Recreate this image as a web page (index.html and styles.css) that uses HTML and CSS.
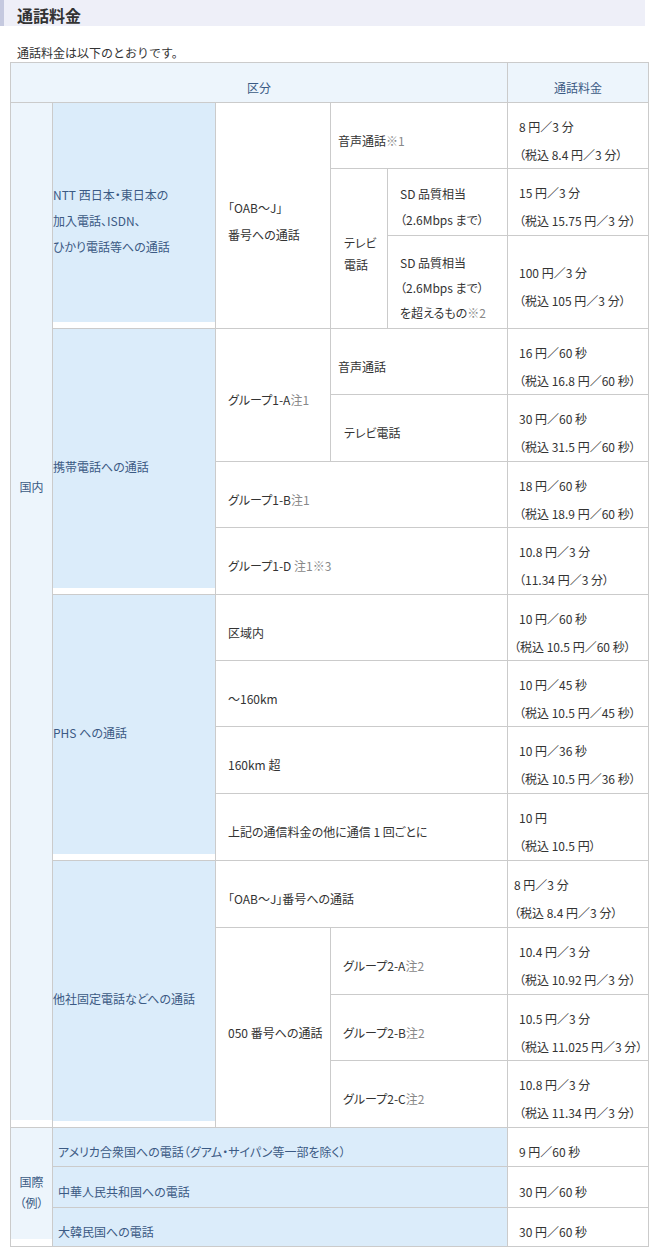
FILE: index.html
```html
<!DOCTYPE html>
<html lang="ja">
<head>
<meta charset="utf-8">
<title>通話料金</title>
<link rel="stylesheet" href="styles.css">
</head>
<body>
<div class="page">
  <h2 class="title">通話料金</h2>
  <p class="lead">通話料金は以下のとおりです。</p>
  <div class="rates">
    <div class="c hd cs5"><span>区分</span></div>
    <div class="c hd"><span>通話料金</span></div>

    <div class="c region rs15 domestic"><span>国内</span></div>
    <div class="c cat rs3 lh26"><span>NTT 西日本・東日本の</span><span>加入電話、ISDN、</span><span>ひかり電話等への通話</span></div>
    <div class="c rs3 lh27"><span>「OAB～J」</span><span>番号への通話</span></div>
    <div class="c cs2 sub"><span>音声通話<em class="note">※1</em></span></div>
    <div class="c price"><span>8 円／3 分</span><span>（税込 8.4 円／3 分）</span></div>

    <div class="c rs2 sub2 lh22"><span>テレビ</span><span>電話</span></div>
    <div class="c"><span>SD 品質相当</span><span>（2.6Mbps まで）</span></div>
    <div class="c price"><span>15 円／3 分</span><span>（税込 15.75 円／3 分）</span></div>

    <div class="c lh25"><span>SD 品質相当</span><span>（2.6Mbps まで）</span><span>を超えるもの<em class="note">※2</em></span></div>
    <div class="c price"><span>100 円／3 分</span><span>（税込 105 円／3 分）</span></div>

    <div class="c cat rs4"><span>携帯電話への通話</span></div>
    <div class="c rs2"><span>グループ1-A<em class="note">注1</em></span></div>
    <div class="c cs2 sub"><span>音声通話</span></div>
    <div class="c price"><span>16 円／60 秒</span><span>（税込 16.8 円／60 秒）</span></div>

    <div class="c cs2 sub2"><span>テレビ電話</span></div>
    <div class="c price"><span>30 円／60 秒</span><span>（税込 31.5 円／60 秒）</span></div>

    <div class="c cs3"><span>グループ1-B<em class="note">注1</em></span></div>
    <div class="c price"><span>18 円／60 秒</span><span>（税込 18.9 円／60 秒）</span></div>

    <div class="c cs3"><span>グループ1-D <em class="note">注1※3</em></span></div>
    <div class="c price"><span>10.8 円／3 分</span><span>（11.34 円／3 分）</span></div>

    <div class="c cat rs4"><span>PHS への通話</span></div>
    <div class="c cs3"><span>区域内</span></div>
    <div class="c price tight"><span class="ind">10 円／60 秒</span><span>（税込 10.5 円／60 秒）</span></div>

    <div class="c cs3"><span>～160km</span></div>
    <div class="c price"><span>10 円／45 秒</span><span>（税込 10.5 円／45 秒）</span></div>

    <div class="c cs3"><span>160km 超</span></div>
    <div class="c price"><span>10 円／36 秒</span><span>（税込 10.5 円／36 秒）</span></div>

    <div class="c cs3"><span>上記の通信料金の他に通信 1 回ごとに</span></div>
    <div class="c price"><span>10 円</span><span>（税込 10.5 円）</span></div>

    <div class="c cat rs4"><span>他社固定電話などへの通話</span></div>
    <div class="c cs3"><span>「OAB～J」番号への通話</span></div>
    <div class="c price tight"><span>8 円／3 分</span><span>（税込 8.4 円／3 分）</span></div>

    <div class="c rs3"><span>050 番号への通話</span></div>
    <div class="c cs2 sub3"><span>グループ2-A<em class="note">注2</em></span></div>
    <div class="c price"><span>10.4 円／3 分</span><span>（税込 10.92 円／3 分）</span></div>

    <div class="c cs2 sub3"><span>グループ2-B<em class="note">注2</em></span></div>
    <div class="c price"><span>10.5 円／3 分</span><span>（税込 11.025 円／3 分）</span></div>

    <div class="c cs2 sub3"><span>グループ2-C<em class="note">注2</em></span></div>
    <div class="c price"><span>10.8 円／3 分</span><span>（税込 11.34 円／3 分）</span></div>

    <div class="c region rs3 lh21"><span>国際</span><span>（例）</span></div>
    <div class="c country cs4"><span>アメリカ合衆国への電話（グアム・サイパン等一部を除く）</span></div>
    <div class="c price"><span>9 円／60 秒</span></div>

    <div class="c country cs4"><span>中華人民共和国への電話</span></div>
    <div class="c price"><span>30 円／60 秒</span></div>

    <div class="c country cs4"><span>大韓民国への電話</span></div>
    <div class="c price"><span>30 円／60 秒</span></div>
  </div>
</div>
</body>
</html>
```

FILE: styles.css
```css
html, body {
  margin: 0;
  padding: 0;
  background: #fff;
}

body {
  font-family: "Noto Sans CJK JP", "Noto Sans", sans-serif;
  font-size: 12px;
  color: #333;
  font-feature-settings: "palt";
}

.page {
  width: 649px;
}

.title {
  margin: 0;
  width: 628px;
  height: 22px;
  padding: 4px 0 0 13px;
  border-left: 4px solid #c5c9df;
  background: #eeeff8;
  font-size: 16px;
  font-weight: bold;
  line-height: 22px;
  color: #333;
}

.lead {
  margin: 0;
  padding: 18px 0 0 17px;
  height: 18px;
  line-height: 18px;
  color: #333;
  font-feature-settings: normal;
}

.rates {
  display: grid;
  grid-template-columns: 41px 162px 114px 56px 119px 140px;
  grid-template-rows: 39px 65px 66px 92px 65px 66px 65px 66px 65px 65px 66px 66px 66px 66px 65px 66px 38px 40px 38px;
  gap: 1px;
  padding: 1px;
  margin-left: 10px;
  width: 637px;
  background: #cbcbcb;
}

.c {
  display: flex;
  flex-direction: column;
  justify-content: center;
  align-items: flex-start;
  padding: 10px 12px 0;
  background: #fff;
  color: #333;
  line-height: 26px;
  white-space: nowrap;
  min-width: 0;
}

.cs2 { grid-column: span 2; }
.cs3 { grid-column: span 3; }
.cs4 { grid-column: span 4; }
.cs5 { grid-column: span 5; }
.rs2 { grid-row: span 2; }
.rs3 { grid-row: span 3; }
.rs4 { grid-row: span 4; }
.rs15 { grid-row: span 15; }

.hd {
  align-items: center;
  background: #edf5fc;
  color: #3b5a84;
  line-height: 29px;
}

.region {
  align-items: center;
  padding-left: 0;
  padding-right: 0;
  color: #3b5a84;
  background: #fff linear-gradient(#edf5fc, #edf5fc) no-repeat left top / 100% calc(100% - 7px);
}

.domestic {
  justify-content: flex-start;
  padding-top: 371px;
}

.cat {
  padding-left: 0;
  padding-right: 0;
  color: #3b5a84;
  background: #fff linear-gradient(#dbecfa, #dbecfa) no-repeat left top / 100% calc(100% - 6px);
}

.country {
  padding-left: 5px;
  color: #3b5a84;
  background: #dbecfa;
}

.sub { padding-left: 7px; }
.sub2 { padding-left: 13px; }
.sub3 { padding-left: 12px; }

.price {
  padding-left: 11px;
  padding-right: 4px;
  line-height: 28px;
}

.price.tight { padding-left: 6px; }
.price .ind { padding-left: 5px; }

.lh21 { line-height: 21px; }
.lh22 { line-height: 22px; }
.lh25 { line-height: 25px; }
.lh26 { line-height: 26px; }
.lh27 { line-height: 27px; }

.note {
  font-style: normal;
  color: #888;
}
```
